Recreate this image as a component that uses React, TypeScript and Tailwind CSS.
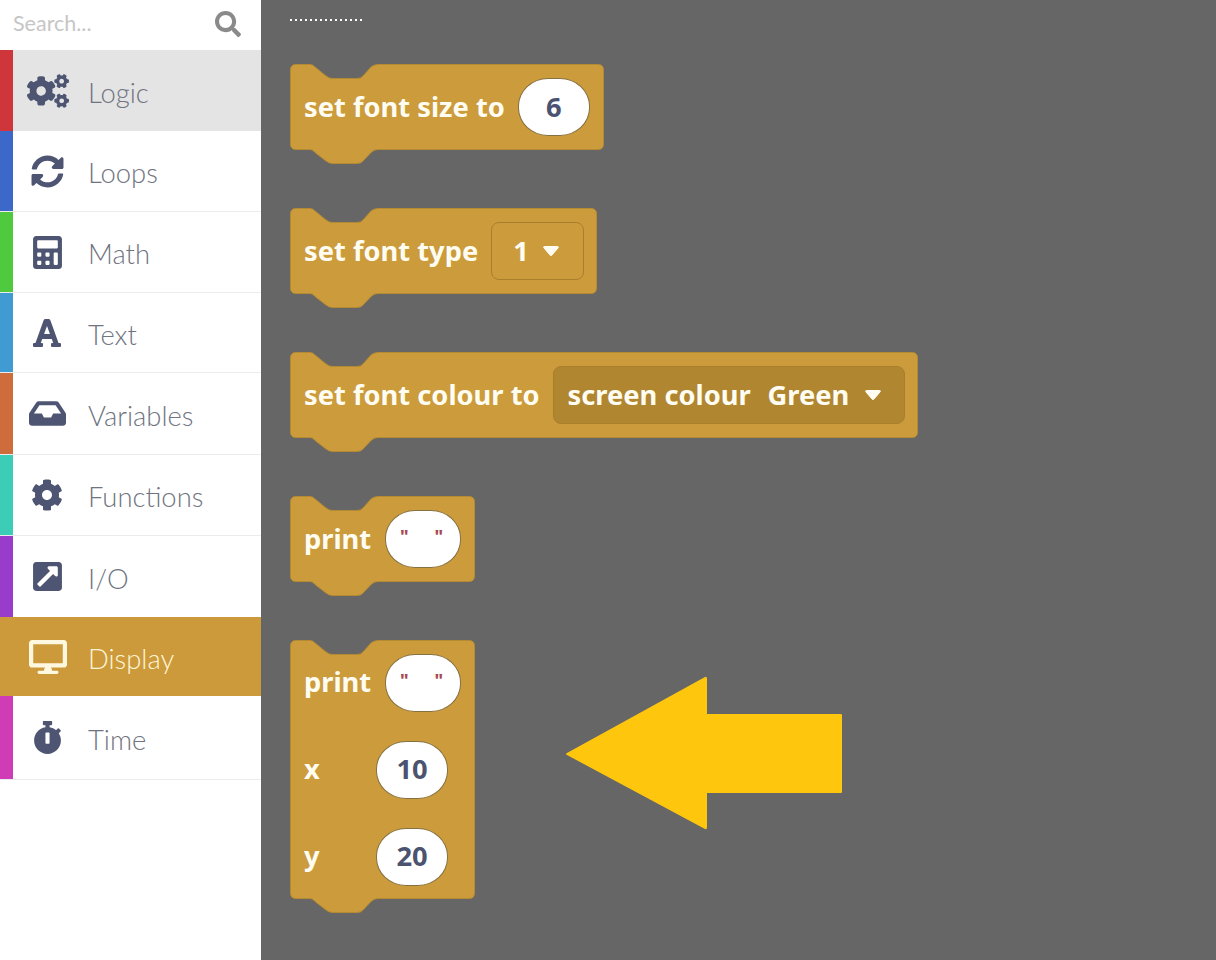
import type { ReactNode } from "react";
import {
  FaCalculator,
  FaCog,
  FaCogs,
  FaDesktop,
  FaExternalLinkSquareAlt,
  FaFont,
  FaInbox,
  FaSearch,
  FaStopwatch,
  FaSyncAlt,
} from "react-icons/fa";

const _CATEGORIES = [
  { label: "Logic", strip: "bg-[#cf363c]", Icon: FaCogs, size: 42, row: "bg-[#e4e4e4] text-[#70747f] h-[81px]", icon: "text-[#4e5572] ml-[2px]" },
  { label: "Loops", strip: "bg-[#3b68c9]", Icon: FaSyncAlt, size: 33, row: "bg-white text-[#70747f] h-[81px] border-b border-[#ececec]", icon: "text-[#4e5572]" },
  { label: "Math", strip: "bg-[#4fc93d]", Icon: FaCalculator, size: 33, row: "bg-white text-[#70747f] h-[81px] border-b border-[#ececec]", icon: "text-[#4e5572]" },
  { label: "Text", strip: "bg-[#3f9bd1]", Icon: FaFont, size: 32, row: "bg-white text-[#70747f] h-[80px] border-b border-[#ececec]", icon: "text-[#4e5572]" },
  { label: "Variables", strip: "bg-[#cf6c3b]", Icon: FaInbox, size: 37, row: "bg-white text-[#70747f] h-[82px] border-b border-[#ececec]", icon: "text-[#4e5572]" },
  { label: "Functions", strip: "bg-[#3ccdb7]", Icon: FaCog, size: 32, row: "bg-white text-[#70747f] h-[81px] border-b border-[#ececec]", icon: "text-[#4e5572]" },
  { label: "I/O", strip: "bg-[#9a3ccb]", Icon: FaExternalLinkSquareAlt, size: 33, row: "bg-white text-[#70747f] h-[81px]", icon: "text-[#4e5572]" },
  { label: "Display", strip: "bg-[#cc9a3a]", Icon: FaDesktop, size: 38, row: "bg-[#cc9a3a] text-[#fff6d8] h-[79px]", icon: "text-[#fff8e0] ml-[2px]" },
  { label: "Time", strip: "bg-[#cf3cb5]", Icon: FaStopwatch, size: 33, row: "bg-white text-[#70747f] h-[84px] border-b border-[#ececec]", icon: "text-[#4e5572]" },
];

function blockPath(w: number, h: number) {
  return [
    "M 5 0.5 H 20 Q 23 0.5 25 3 L 36 12 Q 39 14.5 43 14.5 H 67 Q 71 14.5 73 12 L 81 3 Q 84 0.5 88 0.5",
    `H ${w - 6} Q ${w - 0.5} 0.5 ${w - 0.5} 6 V ${h - 6} Q ${w - 0.5} ${h - 0.5} ${w - 6} ${h - 0.5}`,
    `H 88 Q 84 ${h - 0.5} 81 ${h + 2.5} L 73 ${h + 11} Q 71 ${h + 13.5} 67 ${h + 13.5} H 43 Q 39 ${h + 13.5} 36 ${h + 11} L 25 ${h + 2.5} Q 23 ${h - 0.5} 20 ${h - 0.5}`,
    `H 6 Q 0.5 ${h - 0.5} 0.5 ${h - 6} V 6 Q 0.5 0.5 6 0.5 Z`,
  ].join(" ");
}

function Block({ w, h, children }: { w: number; h: number; children: ReactNode }) {
  return (
    <div className="relative" style={{ width: w, height: h }}>
      <svg className="absolute left-0 top-0 overflow-visible" width={w} height={h + 14}>
        <path d={blockPath(w, h)} fill="#cc9b3b" stroke="#b48a33" strokeWidth="1" />
      </svg>
      <div className="relative flex h-full flex-col justify-center gap-[29px] pl-[14px]">{children}</div>
    </div>
  );
}

function Row({ children }: { children: ReactNode }) {
  return <div className="flex h-[58px] items-center">{children}</div>;
}

function Label({ children, className = "" }: { children: ReactNode; className?: string }) {
  return <span className={`text-[27.3px] font-bold text-[#fffdf2] ${className}`}>{children}</span>;
}

function Field({ children, className = "" }: { children: ReactNode; className?: string }) {
  return (
    <span className={`flex h-[58px] items-center justify-center rounded-[30px/28px] border border-[#85703f] bg-white text-[27.3px] font-bold text-[#4b5370] ${className}`}>
      {children}
    </span>
  );
}

function StringField() {
  return (
    <Field className="w-[76px] gap-[26px] pr-[3px]">
      <span className="mb-[6px] text-[18px] font-bold leading-none text-[#a8474f]">"</span>
      <span className="mb-[6px] text-[18px] font-bold leading-none text-[#a8474f]">"</span>
    </Field>
  );
}

function Caret() {
  return (
    <svg width="18" height="12" viewBox="0 0 18 12">
      <path d="M2.5 1.5 H15.5 Q17 1.5 16 3 L10 10 Q9 11 8 10 L2 3 Q1 1.5 2.5 1.5 Z" fill="#fffdf2" stroke="#fffdf2" strokeWidth="1" />
    </svg>
  );
}

export default function App() {
  return (
    <div className="flex h-[960px] w-[1216px] overflow-hidden bg-white font-['Lato',sans-serif]">
      <aside className="w-[261px] shrink-0">
        <div className="flex h-[50px] items-center justify-between pb-[3px] pl-[13px] pr-[20px]">
          <span className="text-[21.5px] text-[#c6c6c6]">Search...</span>
          <FaSearch size={26} className="text-[#8a8a8a]" />
        </div>
        {_CATEGORIES.map(({ label, strip, Icon, size, row, icon }) => (
          <div className={`flex items-stretch ${row}`} key={label}>
            <div className={`w-[13px] shrink-0 ${strip}`} />
            <div className="flex w-[68px] shrink-0 items-center justify-center">
              <Icon size={size} className={icon} />
            </div>
            <div className="flex items-center pl-[7px] pt-[4px] text-[27.4px] font-light">{label}</div>
          </div>
        ))}
      </aside>

      <main className="relative flex-1 bg-[#666666] pl-[29px] font-['Noto_Sans',sans-serif]">
        <div className="mt-[19px] h-[2px] w-[73px] bg-[repeating-linear-gradient(90deg,#ffffff_0_2px,transparent_2px_5px)]" />
        <div className="mt-[43px] flex flex-col gap-[58px]">
          <Block w={314} h={86}>
            <Row>
              <Label>set font size to</Label>
              <Field className="ml-[13px] w-[72px]">6</Field>
            </Row>
          </Block>
          <Block w={307} h={86}>
            <Row>
              <Label>set font type</Label>
              <span className="ml-[13px] flex h-[58px] w-[93px] items-center gap-[13px] rounded-[8px] border border-[#a97f2c] pl-[21px]">
                <Label>1</Label>
                <Caret />
              </span>
            </Row>
          </Block>
          <Block w={628} h={86}>
            <Row>
              <Label>set font colour to</Label>
              <span className="ml-[13px] flex h-[58px] w-[352px] items-center rounded-[8px] border border-[#a97f2c] bg-[#b18630] pl-[14px]">
                <Label className="w-[200px]">screen colour</Label>
                <Label className="w-[96px]">Green</Label>
                <Caret />
              </span>
            </Row>
          </Block>
          <Block w={185} h={86}>
            <Row>
              <Label className="w-[81px]">print</Label>
              <StringField />
            </Row>
          </Block>
          <Block w={185} h={259}>
            <Row>
              <Label className="w-[81px]">print</Label>
              <StringField />
            </Row>
            <Row>
              <Label className="w-[72px]">x</Label>
              <Field className="w-[72px]">10</Field>
            </Row>
            <Row>
              <Label className="w-[72px]">y</Label>
              <Field className="w-[72px]">20</Field>
            </Row>
          </Block>
        </div>
        <svg className="absolute left-[301px] top-[672px]" width="284" height="162" viewBox="0 0 284 162">
          <path
            d="M5 81 L143 5 Q145 4 145 7 V42 H279 Q280 42 280 43 V120 Q280 121 279 121 H145 V155 Q145 158 143 157 L5 83 Q3 82 5 81 Z"
            fill="#ffc60e"
          />
        </svg>
      </main>
    </div>
  );
}
